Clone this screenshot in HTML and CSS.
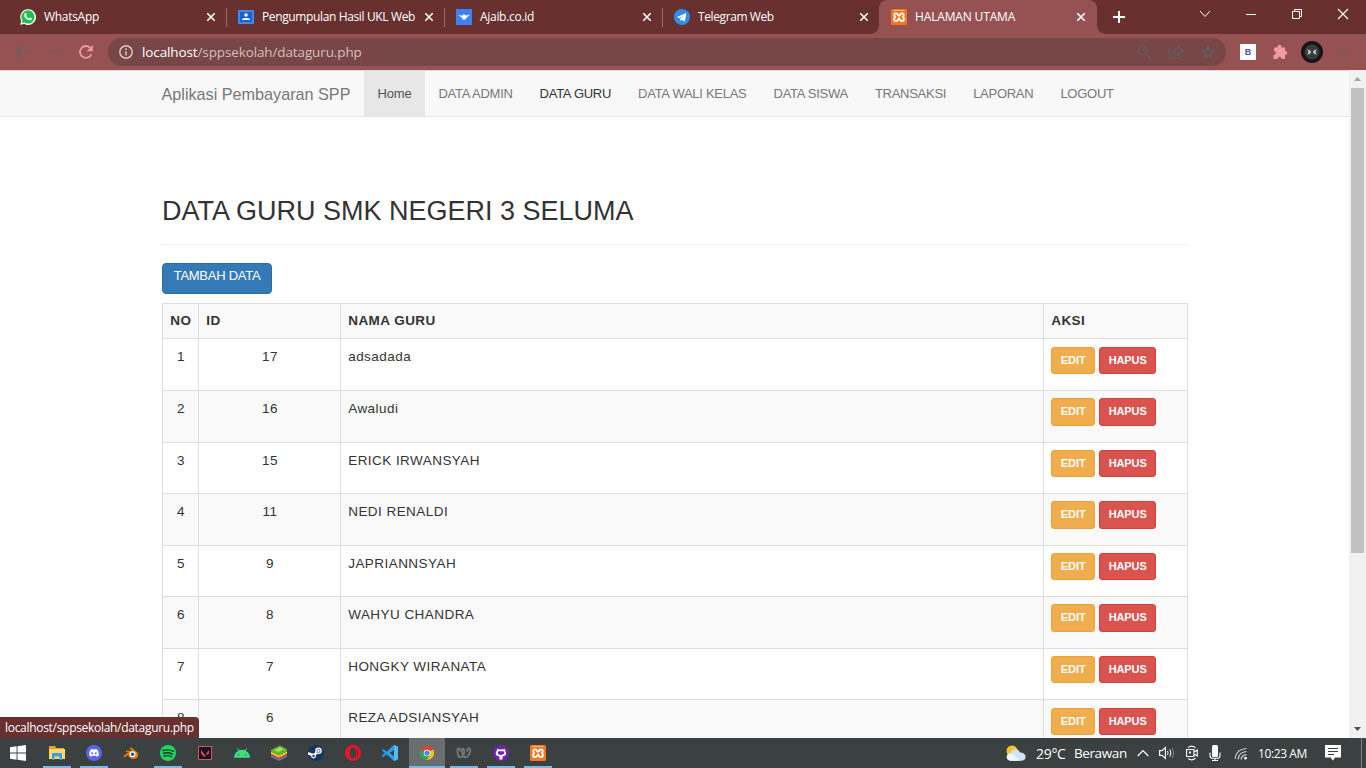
FILE: index.html
```html
<!DOCTYPE html>
<html lang="id">
<head>
<meta charset="utf-8">
<title>HALAMAN UTAMA</title>
<link rel="stylesheet" href="styles.css">
</head>
<body>
<svg width="0" height="0" class="defs">
  <symbol id="xampp" viewBox="0 0 16 16"><rect width="16" height="16" rx="1.500" fill="#f37623"/><path d="M2.500 1.500h11" stroke="#fbc9a2" stroke-width=".8"/><path d="M7 6.200C6.500 3.800 3.300 4 3.300 6.200c0 1.100.7 1.900 1.700 1.900-1 0-1.900.8-1.900 2.100 0 2.500 3.400 2.600 4.100.2L8 9.600l.8.800c.7 2.400 4.100 2.300 4.100-.2 0-1.300-.9-2.100-1.900-2.100 1 0 1.700-.8 1.700-1.900C12.700 4 9.500 3.800 9 6.200L8 6.800z" fill="none" stroke="#fff" stroke-width="1.800"/></symbol>
  <symbol id="close" viewBox="0 0 10 10"><path d="M1.300 1.300l7.400 7.400M8.700 1.300L1.300 8.700" stroke="#fff" stroke-width="1.600"/></symbol>
</svg>
<header class="tabs">
  <div class="tab">
    <svg width="16" height="16" viewBox="0 0 16 16"><path d="M.2 15.800l1-3.900A7.900 7.900 0 1 1 4.300 15z" fill="#fff"/><path d="M1.800 14.300l.7-2.600A6.600 6.600 0 1 1 4.500 13.600z" fill="#1fc04f"/><path d="M5 4.200c.8-.6 1.300 0 1.800 1.400.2.500-.6.900-.5 1.200.7 1.400 1.600 2.100 2.700 2.600.4.100.8-1 1.200-.9 2 .8 1.900 1 1.500 1.700-.8 1.600-3 1.400-5.200-.2C3.900 8.200 3.600 5.500 5 4.200z" fill="#fff"/></svg>
    <span class="tab-name t1">WhatsApp</span><svg class="x" width="10" height="10"><use href="#close"/></svg>
  </div>
  <div class="tab">
    <svg width="16" height="16" viewBox="0 0 16 16"><rect y="1" width="16" height="14" rx="1" fill="#4285f4"/><rect x="2" y="3" width="12" height="10" fill="#1763ce"/><circle cx="8" cy="6" r="1.700" fill="#fff"/><path d="M4 11V10.300c1-1.800 7-1.800 8 0v.7z" fill="#fff"/></svg>
    <span class="tab-name t2">Pengumpulan Hasil UKL Web</span><svg class="x" width="10" height="10"><use href="#close"/></svg>
  </div>
  <div class="tab">
    <svg width="16" height="16" viewBox="0 0 16 16"><rect width="16" height="16" fill="#3a83f7"/><path d="M1.800 5.700l4.200 1.100L8 5l1.700 1.600 4.500-1.200-3.700 3.300-1.200.8.900 1H5.800l1-1.100-2.800-2.200z" fill="#fff"/></svg>
    <span class="tab-name t3">Ajaib.co.id</span><svg class="x" width="10" height="10"><use href="#close"/></svg>
  </div>
  <div class="tab">
    <svg width="16" height="16" viewBox="0 0 16 16"><circle cx="8" cy="8" r="8" fill="#2f8ceb"/><path d="M3 8l9.300-4-1.500 8.700-2.900-2-1.400 1.400-.3-2.500 3.800-3.300-4.800 2.900z" fill="#fff"/></svg>
    <span class="tab-name t4">Telegram Web</span><svg class="x" width="10" height="10"><use href="#close"/></svg>
  </div>
  <div class="tab active">
    <svg width="16" height="16"><use href="#xampp"/></svg>
    <span class="tab-name t5">HALAMAN UTAMA</span><svg class="x" width="10" height="10"><use href="#close"/></svg>
  </div>
  <svg class="plus" width="12" height="12" viewBox="0 0 12 12"><path d="M6 0v12M0 6h12" stroke="#fff" stroke-width="2"/></svg>
  <div class="win">
    <svg width="12" height="12" viewBox="0 0 12 12"><path d="M1 3l5 5.500L11 3" fill="none" stroke="#fff"/></svg>
    <svg width="12" height="12" viewBox="0 0 12 12"><path d="M1 6.500h10" stroke="#fff"/></svg>
    <svg width="12" height="12" viewBox="0 0 12 12"><path d="M1.500 3.500h7v7h-7zM3.500 3.500v-2h7v7h-2" fill="none" stroke="#fff"/></svg>
    <svg width="12" height="12" viewBox="0 0 12 12"><path d="M1 1l10 10M11 1L1 11" stroke="#fff" stroke-width="1.100"/></svg>
  </div>
</header>
<div class="toolbar">
  <svg width="14" height="14" viewBox="0 0 14 14"><path d="M14 7H1.500M7 1L1 7l6 6" fill="none" stroke="#6c6060" stroke-width="1.700"/></svg>
  <svg width="14" height="14" viewBox="0 0 14 14"><path d="M0 7h12.500M7 1l6 6-6 6" fill="none" stroke="#845758" stroke-width="1.700"/></svg>
  <svg width="14" height="14" viewBox="0 0 14 14"><path d="M12.500 9A5.900 5.900 0 1 1 11.600 3.200" fill="none" stroke="#f19a9d" stroke-width="1.800"/><path d="M13.800 0v6.200H7.600z" fill="#f19a9d"/></svg>
  <div class="omnibox">
    <svg width="14" height="14" viewBox="0 0 14 14"><circle cx="7" cy="7" r="6.200" fill="none" stroke="#d5c8c8" stroke-width="1.500"/><path d="M7 6.200v4.200M7 3.300v1.600" stroke="#d5c8c8" stroke-width="1.500"/></svg>
    <span class="url"><b>localhost</b>/sppsekolah/dataguru.php</span>
    <div class="omni-icons">
      <svg width="14" height="14" viewBox="0 0 14 14"><path d="M9 9l4.500 4.500M3.500 5.200h4" stroke="#625e5f" stroke-width="1.500"/><circle cx="5.500" cy="5.200" r="4.500" fill="none" stroke="#625e5f" stroke-width="1.300"/></svg>
      <svg width="16" height="14" viewBox="0 0 16 14"><path d="M1.200 3.500v9.700h10.600V10M4 9.500c.3-4 2.500-5.300 6-5.500V1.200l5 4.600-5 4.600V7.500c-3-.1-4.700.5-6 2z" fill="none" stroke="#625e5f" stroke-width="1.200"/></svg>
      <svg width="14" height="14" viewBox="0 0 14 14"><path d="M7 1.200l1.700 4 4.300.4-3.300 2.800 1 4.200L7 10.400l-3.700 2.200 1-4.200L1 5.600l4.300-.4z" fill="none" stroke="#625e5f" stroke-width="1.500"/></svg>
    </div>
  </div>
  <span class="ext">B</span>
  <svg width="16" height="16" viewBox="0 0 16 16"><path d="M2 3.500h3.600C5.400 1.500 6.300.8 7.500.8s2.100.7 1.900 2.700H13v3.600c3-.3 3 3.900 0 3.600V15H9.500c.2-3-4-3-3.800 0H1.500v-4c3 0 3-4 .5-4z" fill="#f19a9d"/></svg>
  <svg width="22" height="22" viewBox="0 0 22 22"><circle cx="11" cy="11" r="11" fill="#151515"/><circle cx="11" cy="11" r="7.500" fill="#3a3a3a"/><path d="M6 8.500q4 0 4 2.500t-4 2.500q2.500-2.500 0-5zM16 8.500q-4 0-4 2.500t4 2.500q-2.500-2.500 0-5z" fill="#bbb"/></svg>
  <svg class="dots" width="4" height="14" viewBox="0 0 4 14"><g fill="#6c6060"><circle cx="2" cy="2" r="1.600"/><circle cx="2" cy="7" r="1.600"/><circle cx="2" cy="12" r="1.600"/></g></svg>
</div>
<div class="viewport">
  <div class="page">
    <nav class="navbar">
      <a class="brand">Aplikasi Pembayaran SPP</a>
      <a class="nav home">Home</a><a class="nav">DATA ADMIN</a><a class="nav hover">DATA GURU</a><a class="nav">DATA WALI KELAS</a><a class="nav">DATA SISWA</a><a class="nav">TRANSAKSI</a><a class="nav">LAPORAN</a><a class="nav">LOGOUT</a>
    </nav>
    <main class="container">
      <h1>DATA GURU SMK NEGERI 3 SELUMA</h1>
      <a class="add">TAMBAH DATA</a>
      <div class="table">
        <div class="row head"><b>NO</b><b>ID</b><b>NAMA GURU</b><b>AKSI</b></div>
        <div class="row"><span class="c">1</span><span class="c">17</span><span>adsadada</span><span class="acts"><a class="edit">EDIT</a><a class="del">HAPUS</a></span></div>
        <div class="row"><span class="c">2</span><span class="c">16</span><span>Awaludi</span><span class="acts"><a class="edit">EDIT</a><a class="del">HAPUS</a></span></div>
        <div class="row"><span class="c">3</span><span class="c">15</span><span>ERICK IRWANSYAH</span><span class="acts"><a class="edit">EDIT</a><a class="del">HAPUS</a></span></div>
        <div class="row"><span class="c">4</span><span class="c">11</span><span>NEDI RENALDI</span><span class="acts"><a class="edit">EDIT</a><a class="del">HAPUS</a></span></div>
        <div class="row"><span class="c">5</span><span class="c">9</span><span>JAPRIANNSYAH</span><span class="acts"><a class="edit">EDIT</a><a class="del">HAPUS</a></span></div>
        <div class="row"><span class="c">6</span><span class="c">8</span><span>WAHYU CHANDRA</span><span class="acts"><a class="edit">EDIT</a><a class="del">HAPUS</a></span></div>
        <div class="row"><span class="c">7</span><span class="c">7</span><span>HONGKY WIRANATA</span><span class="acts"><a class="edit">EDIT</a><a class="del">HAPUS</a></span></div>
        <div class="row"><span class="c">8</span><span class="c">6</span><span>REZA ADSIANSYAH</span><span class="acts"><a class="edit">EDIT</a><a class="del">HAPUS</a></span></div>
      </div>
    </main>
  </div>
  <div class="scroll">
    <svg width="17" height="17" viewBox="0 0 17 17"><path d="M5 11l3.500-4 3.500 4z" fill="#a3a3a3"/></svg>
    <div class="thumb"></div>
    <svg class="down" width="17" height="17" viewBox="0 0 17 17"><path d="M5 6l3.500 4L12 6z" fill="#505050"/></svg>
  </div>
  <div class="status"><span>localhost/sppsekolah/dataguru.php</span></div>
</div>
<footer class="taskbar">
  <div class="start"><svg width="16" height="16" viewBox="0 0 16 16"><path d="M0 2.300L6.600 1.300v6.200H0zM7.500 1.200L16 0v7.500H7.500zM0 8.400h6.600v6.300L0 13.700zM7.500 8.400H16V16l-8.500-1.200z" fill="#fff"/></svg></div>
  <div class="app open"><svg width="16" height="16" viewBox="0 0 16 16"><path d="M0 1h6l1.500 2H15v3H0z" fill="#e6a118"/><path d="M0 4h16v10H0z" fill="#ffd96b"/><path d="M3 8h10v7h-2.500v-3.500h-5V15H3z" fill="#3f9de4"/></svg></div>
  <div class="app open"><svg width="16" height="16" viewBox="0 0 16 16"><circle cx="8" cy="8" r="8" fill="#5865f2"/><path d="M4.700 4.600l2-.7.500.7h1.600l.5-.7 2 .7c1.200 2 1.700 4 1.500 6l-2.400 1.200-.7-1.100H6.300l-.7 1.100-2.400-1.200c-.2-2 .4-4 1.500-6z" fill="#fff"/><circle cx="6.200" cy="8.300" r="1" fill="#5865f2"/><circle cx="9.800" cy="8.300" r="1" fill="#5865f2"/></svg></div>
  <div class="app"><svg width="16" height="16" viewBox="0 0 16 16"><path d="M3 5.800h6L6.600 3.200 8 2.300l6.200 5c3 4.600-1.500 7.300-5 6.500-2.500-.5-3.800-2-3.900-4L1.500 12.400.5 11.200 5.500 7H3z" fill="#e87d0d"/><circle cx="9.500" cy="9.300" r="3" fill="#fff"/><circle cx="9.600" cy="9.300" r="1.700" fill="#265787"/></svg></div>
  <div class="app open"><svg width="16" height="16" viewBox="0 0 16 16"><circle cx="8" cy="8" r="8" fill="#1ed760"/><path d="M3 5.500q5.500-1.600 10.500.8M3.500 8.300q4.800-1.300 9 .9M4 11q4-1 7.500.7" fill="none" stroke="#12341e" stroke-width="1.400" stroke-linecap="round"/></svg></div>
  <div class="app"><svg width="14" height="14" viewBox="0 0 14 14"><rect x=".5" y=".5" width="13" height="13" fill="#0e1823" stroke="#f04b58"/><path d="M3 4l5 6.500H5.600L3 7.200zM11 4v3.200L9.900 8.600H7.600z" fill="#f04b58"/></svg></div>
  <div class="app"><svg width="16" height="16" viewBox="0 0 16 16"><path d="M0 12.800a8 8 0 0 1 16 0z" fill="#3ddc84"/><path d="M3.300 3.200l2 3M12.700 3.200l-2 3" stroke="#3ddc84"/><circle cx="4.500" cy="9.800" r=".7" fill="#354a3b"/><circle cx="11.500" cy="9.800" r=".7" fill="#354a3b"/></svg></div>
  <div class="app"><svg width="16" height="16" viewBox="0 0 16 16"><path d="M0 10l8 4 8-4v2l-8 4-8-3.800z" fill="#2587e8"/><path d="M0 8.500l8 4 8-4v1.900l-8 4-8-4z" fill="#ee3c31"/><path d="M0 6.500l8 4 8-4v2l-8 4-8-4z" fill="#f9d923"/><path d="M0 5l9-4.500 7 3.700v2L8 10.500 0 6.800z" fill="#63b52d"/><path d="M3 5.200l6-2.900 4 2-5.500 2.800z" fill="#a6df55"/></svg></div>
  <div class="app"><svg width="16" height="16" viewBox="0 0 16 16"><circle cx="8" cy="8" r="8" fill="#14365f"/><path d="M0 8.200l5.500 2.200 3-2.500" stroke="#fff" stroke-width="2.600" fill="none"/><circle cx="5.500" cy="11" r="2.400" fill="#fff"/><circle cx="5.500" cy="11" r="1.200" fill="#14365f"/><circle cx="10.500" cy="5.800" r="3.300" fill="#fff"/><circle cx="10.500" cy="5.800" r="1.900" fill="#14365f"/><circle cx="10.500" cy="5.800" r="1.300" fill="#fff"/></svg></div>
  <div class="app"><svg width="16" height="16" viewBox="0 0 16 16"><circle cx="8" cy="8" r="8" fill="#e8152b"/><ellipse cx="8" cy="8" rx="3.200" ry="5.800" fill="#3b4040"/><path d="M10.500 2c4 3 4 9 0 12 2-3.500 2-8.500 0-12z" fill="#bd0820"/></svg></div>
  <div class="app"><svg width="16" height="16" viewBox="0 0 16 16"><path d="M12 0l4 1.700v12.600L12 16 4.600 9.300 1.400 12 0 11.200V10.500L3 8 0 5.500V4.800L1.400 4l3.200 2.700zM12 4.700L7.800 8l4.200 3.300z" fill="#2a9df4" fill-rule="evenodd"/><path d="M12 0l4 1.700v12.600L12 16z" fill="#54b9f8"/></svg></div>
  <div class="app open current"><svg width="14" height="14" viewBox="0 0 14 14"><path d="M7 7L.9 3.500A7 7 0 0 1 13.100 3.500z" fill="#e64234"/><path d="M7 7l6.100-3.500A7 7 0 0 1 7 14z" fill="#fbc116"/><path d="M.9 3.500A7 7 0 0 0 7 14l3-5.300H4z" fill="#34a853"/><circle cx="7" cy="7" r="3.300" fill="#fff"/><circle cx="7" cy="7" r="2.600" fill="#4285f4"/></svg></div>
  <div class="app open"><svg width="16" height="14" viewBox="0 0 16 14"><path d="M1.500 3.500C1 9 3 12 5.200 11.200 8 10 9 5.500 7.700 3.300 6.500 1.500 5 4 6.300 7.500c1.500 4.500 4 4.700 5.700 2.500C14 7.500 15.300 3 13 2.300 11.500 2 11 3.500 11.300 5M1.500 3.500C2 1.800 4 2 4.200 4.500" fill="none" stroke="#737777" stroke-width="1.900" stroke-linecap="round"/></svg></div>
  <div class="app open"><svg width="16" height="16" viewBox="0 0 16 16"><circle cx="8" cy="8" r="8" fill="#6e26a8"/><path d="M6.500 14.500v-3C1.500 11 2.500 7 4 5.800c-.3-1 0-2 .2-2l2 .8q2-.5 3.700 0l1.900-.8c.3.500.5 1.300.2 2 1.700 2 2 5-2.500 5.700v3z" fill="#fff"/><path d="M5.600 6.300h4.800c1.500 1 1 3.700-2.400 3.700S4 7.500 5.600 6.300z" fill="#6e26a8"/></svg></div>
  <div class="app open"><svg width="16" height="16"><use href="#xampp"/></svg></div>
  <div class="tray">
    <svg width="20" height="17" viewBox="0 0 20 17"><circle cx="6" cy="6" r="5.500" fill="#fbbf2d"/><path d="M4.500 15.800C-1 15 0 8.500 4.500 8.500 6 3 12.500 3 14 7.500c7 0 7.500 8 1 8.300z" fill="#cfe4fa"/><path d="M4.500 15.800C-1 15 0 8.500 4.500 8.500c4 0 7 7.300 10.500 7.300z" fill="#eff7ff"/></svg>
    <span class="deg">29°C</span><span class="weather">Berawan</span>
    <svg class="up" width="12" height="8" viewBox="0 0 12 8"><path d="M.7 7L6 1.500 11.300 7" fill="none" stroke="#fff" stroke-width="1.200"/></svg>
    <svg class="vol" width="16" height="14" viewBox="0 0 16 14"><path d="M.6 4.600h2.500L6.400 1.500v11L3.100 9.400H.6z" fill="none" stroke="#fff" stroke-width="1.100"/><path d="M8.500 5q1.200 2 0 4M10.800 3.500q2.200 3.500 0 7" fill="none" stroke="#fff"/><path d="M13.300 2q3 5 0 10" fill="none" stroke="#8a8d8d"/></svg>
    <svg class="cam" width="12" height="16" viewBox="0 0 12 16"><path d="M.6 4.500h7.300v7H.6zM8 7l3.300-2v6L8 9M2 2.700Q5.500-.5 9.500 2.700M2 13.300q3.500 3.200 7.500 0" fill="none" stroke="#fff" stroke-width="1.100"/><path d="M3 6.500h2v2H3z" fill="#fff"/></svg>
    <svg class="mic" width="12" height="16" viewBox="0 0 12 16"><rect x="3" width="6" height="12" rx="1.500" fill="#fff"/><path d="M1 7.500v3q0 2.800 2.800 2.800h4.400q2.800 0 2.800-2.800v-3M6 13v2.500M3 15.500h6" fill="none" stroke="#fff" stroke-width="1.100"/></svg>
    <svg class="wifi" width="14" height="13" viewBox="0 0 14 13"><path d="M1 12Q2 2 12.500 1.500M4 12.500Q5 5 12.500 4.500M7 12.500Q8 8 12.500 7.700" fill="none" stroke="#d5d7d7" stroke-width="1.200"/><circle cx="11.500" cy="11.200" r="1.400" fill="#fff"/></svg>
    <span class="clock">10:23 AM</span>
    <svg class="note" width="16" height="16" viewBox="0 0 16 16"><path d="M0 0h16v12.500h-6L8 15.500l-2.500-3H0z" fill="#fff"/><path d="M3 3.500h10M3 6.500h10M3 9.500h6" stroke="#3b4040" stroke-width="1.200"/></svg>
    <i class="peek"></i>
  </div>
</footer>
</body>
</html>
```
FILE: styles.css
```css
* { box-sizing: border-box; }
body { margin: 0; width: 1366px; height: 768px; overflow: hidden; background: #fff; display: flex; flex-direction: column; font-family: "Liberation Sans", sans-serif; }
svg { flex: none; display: block; }
.defs { position: absolute; }
.tabs { height: 34px; flex: none; background: #68302f; display: flex; padding-left: 8px; color: #fff; font-family: "Open Sans", sans-serif; font-size: 12px; }
.tab { width: 218px; height: 34px; padding: 0 10px 0 12px; display: flex; align-items: center; position: relative; }
.tab:not(.active)::after { content: ""; position: absolute; right: -1px; top: 8px; width: 1px; height: 19px; background: #956b6b; }
.tab:nth-child(4)::after { display: none; }
.tab:nth-child(4) { padding-right: 11px; }
.tab-name { margin: -1px 0 0 8px; white-space: nowrap; }
.x { margin-left: auto; }
.t1 { letter-spacing: -.3px; }
.t2 { letter-spacing: -.37px; }
.t3 { letter-spacing: -.3px; }
.t4 { letter-spacing: -.4px; }
.t5 { letter-spacing: -.15px; }
.active { width: 218px; padding-right: 11px; margin-left: -1px; background: #965253; border-radius: 8px 8px 0 0; }
.active::before, .active::after { content: ""; position: absolute; bottom: 0; width: 8px; height: 8px; }
.active::before { left: -8px; background: radial-gradient(circle at 0 0, #68302f 7.500px, #965253 8px); }
.active::after { right: -8px; background: radial-gradient(circle at 100% 0, #68302f 7.500px, #965253 8px); }
.plus { margin: 11px 0 0 16px; }
.win { margin-left: auto; padding: 8px 17px 0 0; display: flex; gap: 34px; }
.toolbar { height: 36px; flex: none; background: #965253; display: flex; align-items: center; padding-left: 15px; }
.toolbar > svg { margin-right: 18px; }
.toolbar > svg:nth-child(3) { margin-right: 15px; }
.omnibox { width: 1118px; height: 28px; border-radius: 14px; background: #784646; display: flex; align-items: center; padding: 0 11px; }
.url { margin-left: 9px; font: 13.500px "Open Sans", sans-serif; color: #d2bfbf; letter-spacing: -.12px; }
.url b { font-weight: 400; color: #fff; }
.omni-icons { margin-left: auto; display: flex; gap: 17px; }
.ext { width: 16px; height: 16px; margin: 0 16px 0 14px; background: #fff; color: #4c4eb5; font: bold 9px/16px "Liberation Sans", sans-serif; text-align: center; }
.toolbar > .ext + svg { margin-right: 13px; }
.toolbar > .ext + svg + svg { margin-right: 19px; }
.toolbar > .dots { margin: 0; }
.viewport { flex: 1; min-height: 0; display: flex; position: relative; }
.page { width: 1349px; overflow: hidden; }
.navbar { height: 47px; background: #f8f8f8; border-top: 1px solid #dadada; border-bottom: 1px solid #e7e7e7; padding-left: 148px; display: flex; color: #777; font-size: 13px; letter-spacing: -.27px; line-height: 18px; white-space: nowrap; }
.brand { font-size: 16.200px; letter-spacing: 0; width: 216px; padding: 14px 0 0 13.500px; }
.nav { padding: 13.500px 13.500px 0; }
.home { background: #e7e7e7; color: #555; width: 61px; letter-spacing: -.15px; }
.hover { color: #333; }
.container { width: 1026px; margin-left: 162px; color: #333; }
h1 { margin: 0; padding-top: 77px; height: 128px; border-bottom: 1px solid #eee; font-size: 27px; line-height: 34px; font-weight: 400; white-space: nowrap; }
.add { display: block; width: 110px; height: 31px; margin-top: 18px; background: #337ab7; border: 1px solid #2e6da4; border-radius: 4px; color: #fff; font-size: 13px; letter-spacing: -.27px; line-height: 18px; padding-top: 3px; text-align: center; }
.table { margin-top: 9px; border-right: 1px solid #ddd; font-size: 13.500px; line-height: 18px; letter-spacing: .45px; }
.row { display: grid; grid-template-columns: 36px 142px 703px 144px; height: 51.550px; border-top: 1px solid #ddd; }
.row.head { height: 35.450px; }
.row:nth-child(odd) { background: #f9f9f9; }
.row > * { border-left: 1px solid #ddd; padding: 9px 7.200px 0; }
.row > b { padding-top: 8px; }
.row > .c { text-align: center; padding-left: 8px; }
.row > .acts { display: flex; gap: 4px; padding-top: 7.250px; }
.acts a { height: 27.500px; border-radius: 3px; border: 1px solid #eea236; background: #f0ad4e; color: #fff; font-size: 11px; line-height: 25px; font-weight: 700; text-align: center; letter-spacing: -.1px; width: 44px; }
.acts .del { width: 57px; background: #d9534f; border-color: #d43f3a; }
.scroll { width: 17px; background: #f1f1f1; display: flex; flex-direction: column; }
.thumb { width: 13px; height: 465px; margin: 1px 2px 0; background: #c1c1c1; }
.down { margin-top: auto; }
.status { position: absolute; left: 0; bottom: 0; width: 199px; height: 21px; background: #68302f; color: #fff; border-radius: 0 4px 0 0; padding-left: 5px; font: 12px/21px "Open Sans", sans-serif; letter-spacing: -.3px; white-space: nowrap; }
.taskbar { height: 30px; flex: none; background: #3b4040; display: flex; color: #fff; font-family: "Open Sans", sans-serif; white-space: nowrap; }
.start { width: 38px; display: flex; align-items: center; padding-left: 10px; }
.app { width: 37px; height: 30px; display: flex; align-items: center; justify-content: center; position: relative; }
.open::after { content: ""; position: absolute; left: 5px; right: 4px; bottom: 0; height: 2px; background: #76b9ed; }
.current { background: linear-gradient(90deg, transparent 1px, #6a6e6e 1px); }
.current::after { left: 1px; right: 0; }
.tray { margin-left: auto; display: flex; align-items: center; }
.deg { font-size: 14px; width: 29px; margin-left: 10px; letter-spacing: -.3px; }
.weather { font-size: 13.500px; width: 53px; margin-left: 9px; letter-spacing: -.4px; }
.up { margin-left: 10px; }
.vol { margin-left: 10px; }
.cam { margin-left: 11px; }
.mic { margin-left: 11px; }
.wifi { margin-left: 13px; }
.clock { font-size: 12px; width: 49px; margin-left: 10px; letter-spacing: -.4px; }
.note { margin-left: 18px; }
.peek { width: 1px; height: 30px; background: #7b7f7f; margin: 0 4px 0 20px; }
```
